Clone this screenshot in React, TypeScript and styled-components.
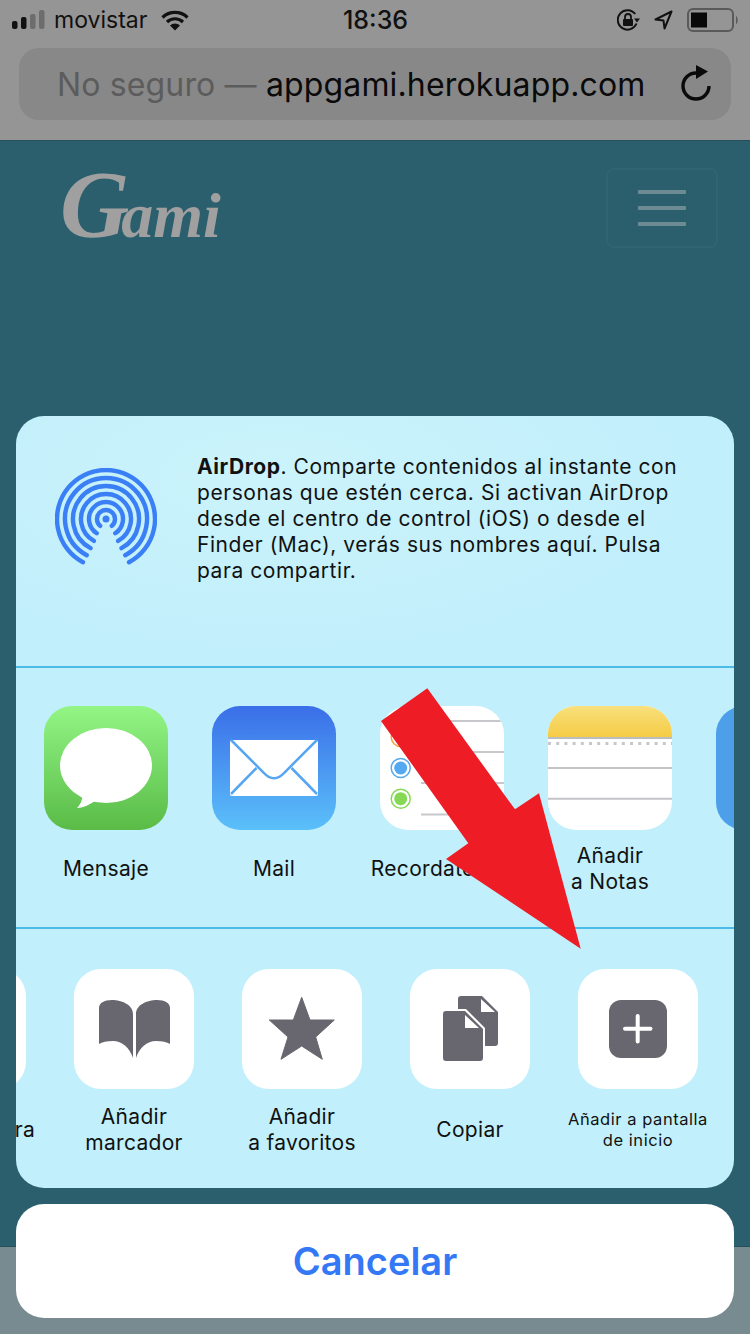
import React from "react";
import styled, { createGlobalStyle } from "styled-components";

const SANS = `Inter, "Noto Sans", "Liberation Sans", sans-serif`;

const GlobalStyle = createGlobalStyle`
  html, body {
    margin: 0;
    padding: 0;
    background: #778b90;
  }
  * {
    box-sizing: border-box;
  }
`;

const Page = styled.div`
  position: relative;
  width: 750px;
  height: 1334px;
  overflow: hidden;
  display: flex;
  flex-direction: column;
  font-family: ${SANS};
  background: #778b90;
`;

const Chrome = styled.header`
  height: 141px;
  flex: none;
  background: #959595;
  border-bottom: 1px solid #24505c;
`;

const StatusBar = styled.div`
  height: 48px;
  padding: 0 11px 0 12px;
  display: grid;
  grid-template-columns: 1fr auto 1fr;
  align-items: start;
  color: #111;
`;

const StatusLeft = styled.div`
  height: 40px;
  display: flex;
  align-items: center;
`;

const Carrier = styled.span`
  margin-left: 9px;
  margin-right: 14px;
  font-size: 23px;
`;

const Clock = styled.span`
  height: 40px;
  line-height: 40px;
  font-size: 25px;
  font-weight: 500;
`;

const StatusRight = styled.div`
  height: 40px;
  display: flex;
  justify-content: flex-end;
  align-items: center;
  gap: 14px;
`;

const UrlBar = styled.div`
  margin: 0 19px;
  height: 72px;
  padding: 0 20px 0 38px;
  border-radius: 20px;
  background: #888888;
  display: flex;
  align-items: center;
  justify-content: space-between;
  font-size: 32px;
  letter-spacing: 0.15px;
  white-space: nowrap;
`;

const UrlText = styled.span<{ $muted?: boolean }>`
  color: ${(p) => (p.$muted ? "#5c5c5c" : "#0a0a0a")};
`;

const Site = styled.main`
  flex: 1;
  background: #2c5f6d;
  padding: 27px 32px 0 60px;
  display: flex;
  justify-content: space-between;
  align-items: flex-start;
`;

const Logo = styled.span`
  font-family: "Liberation Serif", serif;
  font-style: italic;
  font-weight: 700;
  font-size: 96px;
  line-height: 73px;
  color: #a0a0a0;
  white-space: nowrap;
`;

const LogoRest = styled.span`
  font-size: 64px;
  margin-left: -8px;
`;

const Toggler = styled.div`
  width: 112px;
  height: 80px;
  border: 2px solid #2f6472;
  border-radius: 8px;
  display: flex;
  flex-direction: column;
  align-items: center;
  justify-content: center;
  gap: 12px;
`;

const TogglerBar = styled.span`
  width: 48px;
  height: 4px;
  border-radius: 1px;
  background: #6c8b92;
`;

const BottomStrip = styled.div`
  height: 88px;
  flex: none;
  background: #778b90;
  border-top: 1px solid #24505c;
`;

const Overlay = styled.div`
  position: absolute;
  left: 16px;
  right: 16px;
  bottom: 16px;
  display: flex;
  flex-direction: column;
  gap: 16px;
`;

const Sheet = styled.section`
  border-radius: 28px;
  overflow: hidden;
  background: radial-gradient(ellipse 420px 180px at 260px 60px, #cbf3fb 0%, #c1effb 100%);
  display: flex;
  flex-direction: column;
`;

const AirDropRow = styled.div`
  height: 250px;
  padding: 38px 0 0 39px;
  display: flex;
  gap: 40px;
`;

const AirDropGlyph = styled.svg`
  flex: none;
  margin-top: 14px;
`;

const AirDropText = styled.p`
  margin: 0;
  font-size: 21px;
  letter-spacing: 0.55px;
  line-height: 26px;
  color: #111;
  white-space: nowrap;
  strong {
    font-weight: 700;
  }
`;

const Divider = styled.div`
  height: 2px;
  flex: none;
  background: #4bbce6;
`;

const Track = styled.div<{ $offset: number; $height: number; $top: number }>`
  height: ${(p) => p.$height}px;
  padding-top: ${(p) => p.$top}px;
  margin-left: ${(p) => p.$offset}px;
  display: flex;
`;

const Cell = styled.div`
  width: 168px;
  flex: none;
  display: flex;
  flex-direction: column;
  align-items: center;
`;

const AppIcon = styled.div<{ $size: number; $bg?: string }>`
  width: ${(p) => p.$size}px;
  height: ${(p) => p.$size}px;
  flex: none;
  border-radius: ${(p) => Math.round(p.$size * 0.225)}px;
  background: ${(p) => p.$bg || "#fff"};
  overflow: hidden;
  svg {
    display: block;
  }
`;

const Label = styled.div<{ $height: number; $small?: boolean }>`
  height: ${(p) => p.$height}px;
  width: 100%;
  display: flex;
  align-items: center;
  justify-content: center;
  text-align: center;
  color: #111;
  white-space: pre-line;
  font-size: ${(p) => (p.$small ? 16.5 : 21)}px;
  letter-spacing: ${(p) => (p.$small ? 0.55 : 0.3)}px;
  line-height: ${(p) => (p.$small ? 21 : 26)}px;
`;

const ClippedLabel = styled(Label)`
  justify-content: flex-end;
  padding-right: 15px;
`;

const CancelButton = styled.button`
  height: 114px;
  border: none;
  border-radius: 28px;
  background: #fff;
  color: #3478f6;
  font-family: ${SANS};
  font-size: 38px;
  font-weight: 600;
  padding: 0;
`;

const Arrow = styled.svg`
  position: absolute;
  left: 0;
  top: 0;
  pointer-events: none;
`;

const SignalIcon = () => (
  <svg width="33" height="20" viewBox="0 0 33 20">
    <rect x="0" y="11" width="5.500" height="8" rx="2" fill="#111" />
    <rect x="9" y="7" width="5.500" height="12" rx="2" fill="#111" />
    <rect x="18" y="4" width="5.500" height="15" rx="2" fill="#6d6d6d" />
    <rect x="27" y="0" width="5.500" height="19" rx="2" fill="#6d6d6d" />
  </svg>
);

const WifiIcon = () => (
  <svg width="28" height="21" viewBox="0 0 28 21" fill="none" stroke="#111" strokeWidth="3.200">
    <path d="M1.500 7.500a18 18 0 0 1 25 0" />
    <path d="M6 12a11.500 11.500 0 0 1 16 0" />
    <path d="M14 20.500l-5-5a7 7 0 0 1 10 0z" fill="#111" stroke="none" />
  </svg>
);

const RotationLockIcon = () => (
  <svg width="23" height="22" viewBox="0 0 23 22" fill="none">
    <path d="M18.200 5A9.700 9.700 0 1 0 19.500 14.500" stroke="#111" strokeWidth="2" />
    <path d="M17 9.500h6l-3 4z" fill="#111" />
    <rect x="6" y="10" width="10" height="7" rx="1" fill="#111" />
    <path d="M8 10V8a3 3 0 0 1 6 0v2" stroke="#111" strokeWidth="1.800" />
  </svg>
);

const LocationIcon = () => (
  <svg width="19" height="20" viewBox="0 0 19 20" fill="none">
    <path d="M17.500 1.500L1.500 9.500l8 1 1 8z" stroke="#111" strokeWidth="2" strokeLinejoin="round" />
  </svg>
);

const BatteryIcon = () => (
  <svg width="52" height="24" viewBox="0 0 52 24" fill="none">
    <rect x="1" y="1" width="45" height="22" rx="5" stroke="#5a5a5a" strokeWidth="2" />
    <rect x="4" y="4.500" width="16" height="15" fill="#0a0a0a" />
    <path d="M49 8c2 1 2.500 7 0 8z" fill="#5a5a5a" />
  </svg>
);

const ReloadIcon = () => (
  <svg width="30" height="38" viewBox="0 0 30 38" fill="none">
    <path d="M15 8A13 13 0 1 0 28 21" stroke="#0a0a0a" strokeWidth="3.400" />
    <path d="M15 0l12 6.500L15 14z" fill="#0a0a0a" />
  </svg>
);

const airDropRings = [
  { r: 9, half: 40 },
  { r: 17, half: 33 },
  { r: 25, half: 29 },
  { r: 33, half: 28 },
  { r: 41, half: 28 },
  { r: 49, half: 28 },
];

const ringPath = (r: number, half: number) => {
  const rad = (half * Math.PI) / 180;
  const dx = (r * Math.sin(rad)).toFixed(2);
  const dy = (r * Math.cos(rad)).toFixed(2);
  return `M${-dx} ${dy}A${r} ${r} 0 1 1 ${dx} ${dy}`;
};

const AirDropIcon = () => (
  <AirDropGlyph width="102" height="98" viewBox="-51 -51 102 98" fill="none" stroke="#3a7ff6" strokeWidth="4.400" strokeLinecap="round">
    <circle r="3.500" fill="#3a7ff6" stroke="none" />
    {airDropRings.map((ring) => (
      <path key={ring.r} d={ringPath(ring.r, ring.half)} />
    ))}
  </AirDropGlyph>
);

const MessagesGlyph = () => (
  <svg width="124" height="124" viewBox="0 0 124 124">
    <ellipse cx="62" cy="59.500" rx="46" ry="37.500" fill="#fff" />
    <path d="M38 88c1 6-2 11-5 14 6 0 12-3 18-7z" fill="#fff" />
  </svg>
);

const MailGlyph = () => (
  <svg width="124" height="124" viewBox="0 0 124 124">
    <rect x="18" y="34" width="88" height="56" rx="2" fill="#fff" />
    <path d="M19 34l33 33c6 7 14 7 20 0l33-33M44.500 62L19 88M79.500 62L105 88" fill="none" stroke="#57a6f2" strokeWidth="2.500" />
  </svg>
);

const RemindersGlyph = () => (
  <svg width="124" height="124" viewBox="0 0 124 124" fill="none">
    <g stroke="#c8c8cc" strokeWidth="2">
      <path d="M41 15h83M41 46h83M41 77h83M41 108.500h83" />
    </g>
    <circle cx="20.700" cy="31" r="9.500" stroke="#f5a33a" strokeWidth="1.500" />
    <circle cx="20.700" cy="31" r="6.500" fill="#f5a33a" />
    <circle cx="20.700" cy="62" r="9.500" stroke="#54a9f0" strokeWidth="1.500" />
    <circle cx="20.700" cy="62" r="6.500" fill="#54a9f0" />
    <circle cx="20.700" cy="92.700" r="9.500" stroke="#86d955" strokeWidth="1.500" />
    <circle cx="20.700" cy="92.700" r="6.500" fill="#86d955" />
  </svg>
);

const NotesGlyph = () => (
  <svg width="124" height="124" viewBox="0 0 124 124">
    <defs>
      <linearGradient id="notesTop" x1="0" y1="0" x2="0" y2="1">
        <stop offset="0" stopColor="#f8e07c" />
        <stop offset="1" stopColor="#f5cc45" />
      </linearGradient>
    </defs>
    <rect width="124" height="31" fill="url(#notesTop)" />
    <rect y="31" width="124" height="2" fill="#bdbdbd" />
    <path d="M0 37.500h124" stroke="#c8c8cc" strokeWidth="3" strokeDasharray="3 5.200" />
    <path d="M0 62h124M0 92.700h124" stroke="#c4c4c9" strokeWidth="2" />
  </svg>
);

const BookGlyph = () => (
  <svg width="120" height="120" viewBox="0 0 120 120" fill="#68676f">
    <path d="M25 39c0-5 5-8 13-8 10 0 21 5 21 14v44c-3-10-11-17-20-17-6 0-11 1-14 3z" />
    <path d="M96 39c0-5-5-8-13-8-10 0-21 5-21 14v44c3-10 11-17 20-17 6 0 11 1 14 3z" />
  </svg>
);

const StarGlyph = () => (
  <svg width="120" height="120" viewBox="0 0 120 120">
    <path
      d="M59.700 28.300L68 51h24.300L73.700 68l6.600 22.300-20.600-13.300-20.700 13.300L46 68 27.300 51h24z"
      fill="#68676f"
      stroke="#68676f"
      strokeWidth="1"
      strokeLinejoin="round"
    />
  </svg>
);

const CopyGlyph = () => (
  <svg width="120" height="120" viewBox="0 0 120 120">
    <path d="M51 27h21l16 16v31a3 3 0 0 1-3 3H51a3 3 0 0 1-3-3V30a3 3 0 0 1 3-3z" fill="#68676f" />
    <path d="M71 30v13h14z" fill="#fff" />
    <path d="M36 40h20l19 19v34H30V40z" fill="#fff" />
    <path d="M36 42h19l18 18v29a3 3 0 0 1-3 3H36a3 3 0 0 1-3-3V45a3 3 0 0 1 3-3z" fill="#68676f" />
    <path d="M55 46v13h14z" fill="#fff" />
  </svg>
);

const AddGlyph = () => (
  <svg width="120" height="120" viewBox="0 0 120 120">
    <rect x="31" y="31" width="58" height="58" rx="12" fill="#68676f" />
    <path d="M59.700 47v25.500M47 59.700h25.500" stroke="#fff" strokeWidth="4" strokeLinecap="round" />
  </svg>
);

const App = () => (
  <Page>
    <GlobalStyle />
    <Chrome>
      <StatusBar>
        <StatusLeft>
          <SignalIcon />
          <Carrier>movistar</Carrier>
          <WifiIcon />
        </StatusLeft>
        <Clock>18:36</Clock>
        <StatusRight>
          <RotationLockIcon />
          <LocationIcon />
          <BatteryIcon />
        </StatusRight>
      </StatusBar>
      <UrlBar>
        <span>
          <UrlText $muted>No seguro — </UrlText>
          <UrlText>appgami.herokuapp.com</UrlText>
        </span>
        <ReloadIcon />
      </UrlBar>
    </Chrome>
    <Site>
      <Logo>
        G<LogoRest>ami</LogoRest>
      </Logo>
      <Toggler>
        <TogglerBar />
        <TogglerBar />
        <TogglerBar />
      </Toggler>
    </Site>
    <BottomStrip />
    <Overlay>
      <Sheet>
        <AirDropRow>
          <AirDropIcon />
          <AirDropText>
            <strong>AirDrop</strong>. Comparte contenidos al instante con
            <br />
            personas que estén cerca. Si activan AirDrop
            <br />
            desde el centro de control (iOS) o desde el
            <br />
            Finder (Mac), verás sus nombres aquí. Pulsa
            <br />
            para compartir.
          </AirDropText>
        </AirDropRow>
        <Divider />
        <Track $offset={6} $height={259} $top={38}>
          <Cell>
            <AppIcon $size={124} $bg="linear-gradient(#92f585, #5abb47)">
              <MessagesGlyph />
            </AppIcon>
            <Label $height={78}>Mensaje</Label>
          </Cell>
          <Cell>
            <AppIcon $size={124} $bg="linear-gradient(#3a6ee8, #5bc0fa)">
              <MailGlyph />
            </AppIcon>
            <Label $height={78}>Mail</Label>
          </Cell>
          <Cell>
            <AppIcon $size={124}>
              <RemindersGlyph />
            </AppIcon>
            <Label $height={78}>Recordatorios</Label>
          </Cell>
          <Cell>
            <AppIcon $size={124}>
              <NotesGlyph />
            </AppIcon>
            <Label $height={78}>{"Añadir\na Notas"}</Label>
          </Cell>
          <Cell>
            <AppIcon $size={124} $bg="#4d9fea" />
          </Cell>
        </Track>
        <Divider />
        <Track $offset={-134} $height={259} $top={40}>
          <Cell>
            <AppIcon $size={120} />
            <ClippedLabel $height={82}>ra</ClippedLabel>
          </Cell>
          <Cell>
            <AppIcon $size={120}>
              <BookGlyph />
            </AppIcon>
            <Label $height={82}>{"Añadir\nmarcador"}</Label>
          </Cell>
          <Cell>
            <AppIcon $size={120}>
              <StarGlyph />
            </AppIcon>
            <Label $height={82}>{"Añadir\na favoritos"}</Label>
          </Cell>
          <Cell>
            <AppIcon $size={120}>
              <CopyGlyph />
            </AppIcon>
            <Label $height={82}>Copiar</Label>
          </Cell>
          <Cell>
            <AppIcon $size={120}>
              <AddGlyph />
            </AppIcon>
            <Label $height={82} $small>
              {"Añadir a pantalla\nde inicio"}
            </Label>
          </Cell>
        </Track>
      </Sheet>
      <CancelButton>Cancelar</CancelButton>
    </Overlay>
    <Arrow width="750" height="1334" viewBox="0 0 750 1334">
      <polygon
        points="427.3,688.3 381,721 468.3,843.3 446,859 580.7,948.7 539,793.3 515,809.3"
        fill="#ee1c25"
      />
    </Arrow>
  </Page>
);

export default App;
